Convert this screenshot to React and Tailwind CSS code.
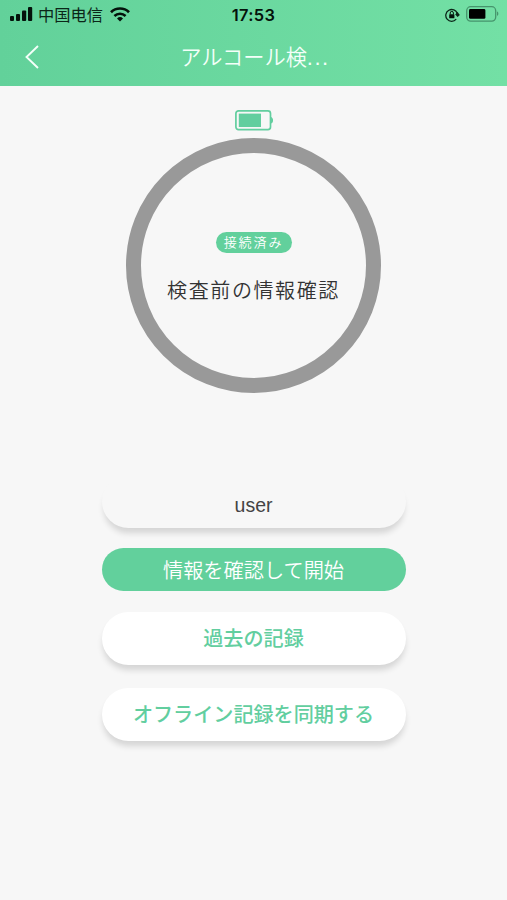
import React, { useState } from "react";

function SignalBars() {
  return (
    <svg width="23" height="15" viewBox="0 0 23 15" fill="#04120b">
      <rect x="0" y="9" width="4" height="5" rx="1" />
      <rect x="6" y="7" width="4" height="7" rx="1" />
      <rect x="12" y="3.5" width="4.2" height="10.5" rx="1" />
      <rect x="18" y="0" width="4.2" height="14" rx="1" />
    </svg>
  );
}

function Wifi() {
  return (
    <svg width="20" height="15" viewBox="0 0 20 15" fill="none" stroke="#04120b">
      <path d="M1 5.2a12.8 12.8 0 0 1 18 0" strokeWidth="2.7" />
      <path d="M4.4 9a8 8 0 0 1 11.2 0" strokeWidth="2.5" />
      <path d="M10 14.4l-3-3a4.3 4.3 0 0 1 6 0z" fill="#04120b" stroke="none" />
    </svg>
  );
}

function RotationLock() {
  return (
    <svg width="15" height="14" viewBox="0 0 15 14" fill="none">
      <path
        d="M11.2 11.2A5.9 5.9 0 1 1 12.3 5.6"
        stroke="#0b2618"
        strokeWidth="1.3"
      />
      <path d="M10.2 6.4l2.2-2.6 2.4 3.2-2.2 2z" fill="#0b2618" />
      <rect x="4.2" y="6.3" width="5.2" height="4" rx="0.6" fill="#04120b" />
      <path d="M5.2 6.5V5a1.6 1.6 0 0 1 3.2 0v1.5" stroke="#04120b" strokeWidth="1" />
    </svg>
  );
}

function PhoneBattery() {
  return (
    <svg width="33" height="16" viewBox="0 0 33 16" fill="none">
      <rect x="0.7" y="0.7" width="29" height="14.4" rx="4" stroke="#46946c" strokeWidth="1.3" />
      <rect x="3" y="3" width="16.4" height="9.8" rx="1.4" fill="#000" />
      <path d="M31 5.6c1.8.6 1.8 3.8 0 4.4z" fill="#46946c" />
    </svg>
  );
}

function DeviceBattery() {
  return (
    <svg width="38" height="21" viewBox="0 0 38 21" fill="none">
      <rect x="0.9" y="0.9" width="34.6" height="18.8" rx="2.6" stroke="#62ce9f" strokeWidth="1.7" />
      <rect x="3.8" y="3.6" width="22.2" height="13.4" fill="#62ce9f" />
      <path d="M35.8 7c3 .4 3 6.2 0 6.6z" fill="#62ce9f" />
    </svg>
  );
}

function App() {
  const [userName] = useState("user");

  return (
    <div className="h-[900px] w-[507px] overflow-hidden bg-[#f7f7f7] font-['Noto_Sans_CJK_JP',sans-serif]">
      {/* Header */}
      <header className="h-[86px] bg-linear-to-r from-[#62d19a] to-[#73e0a5]">
        <div className="grid h-[30px] grid-cols-3 items-center pr-2 pl-[10px]">
          <div className="-mt-px flex items-center">
            <SignalBars />
            <span className="mr-[7px] ml-[5px] font-['Noto_Sans_CJK_SC',sans-serif] text-[16.3px] leading-[29px] whitespace-nowrap text-[#0b2618]">
              中国电信
            </span>
            <Wifi />
          </div>
          <span className="-ml-[2px] text-center font-['Inter',sans-serif] text-[16.4px] leading-[30px] font-semibold tracking-[0.3px] text-[#04120b]">
            17:53
          </span>
          <div className="-mt-[2px] flex items-center justify-end gap-[6px]">
            <div className="mt-[2px]">
              <RotationLock />
            </div>
            <PhoneBattery />
          </div>
        </div>

        <div className="grid h-14 grid-cols-[60px_1fr_60px] items-center">
          <button className="-mt-[2px] pl-[25px]">
            <svg width="14" height="24" viewBox="0 0 14 24" fill="none" stroke="#f4fff9" strokeWidth="1.9">
              <path d="M13 1L1.5 12 13 23" />
            </svg>
          </button>
          <h1 className="-mt-[3px] pl-[3px] text-center text-[21.2px] leading-[30px] font-[350] text-[#f4fff9]">
            アルコール検<span className="font-['Liberation_Sans',sans-serif] text-[22px] tracking-[1.5px]">...</span>
          </h1>
        </div>
      </header>

      <main className="flex flex-col items-center">
        <div className="mt-6">
          <DeviceBattery />
        </div>

        {/* Status ring */}
        <div className="mt-[6.5px] flex h-[255px] w-[255px] flex-col items-center rounded-full border-[15px] border-[#999999]">
          <span className="mt-[79.5px] h-[21px] w-[76px] rounded-full bg-[#62d09c] text-center text-[13px] leading-[20px] font-[350] tracking-[1.9px] text-white">
            接続済み
          </span>
          <p className="mt-[22px] text-[20px] leading-[30px] font-[350] tracking-[1.6px] whitespace-nowrap text-[#333333]">
            検査前の情報確認
          </p>
        </div>

        {/* Actions */}
        <div className="mt-[82.5px] flex w-[304px] flex-col">
          <div className="h-[53px] rounded-[27px] bg-[#f7f7f7] text-center font-['Liberation_Sans',sans-serif] text-[19.5px] leading-[60px] text-[#444444] shadow-[0_7px_6px_-2px_rgba(0,0,0,0.14)]">
            {userName}
          </div>
          <button className="mt-5 h-[43px] rounded-full bg-[#62d09c] text-[20.2px] leading-[42px] font-[350] text-white">
            情報を確認して開始
          </button>
          <button className="mt-[21px] h-[53px] rounded-full bg-white pb-[2px] text-[20.1px] leading-[51px] font-medium text-[#62ce9f] shadow-[0_6px_6px_-1px_rgba(0,0,0,0.14)]">
            過去の記録
          </button>
          <button className="mt-[23px] h-[53px] rounded-full bg-white pb-[2px] text-[20.1px] leading-[50px] font-medium text-[#62ce9f] shadow-[0_6px_6px_-1px_rgba(0,0,0,0.14)]">
            オフライン記録を同期する
          </button>
        </div>
      </main>
    </div>
  );
}

export default App;
